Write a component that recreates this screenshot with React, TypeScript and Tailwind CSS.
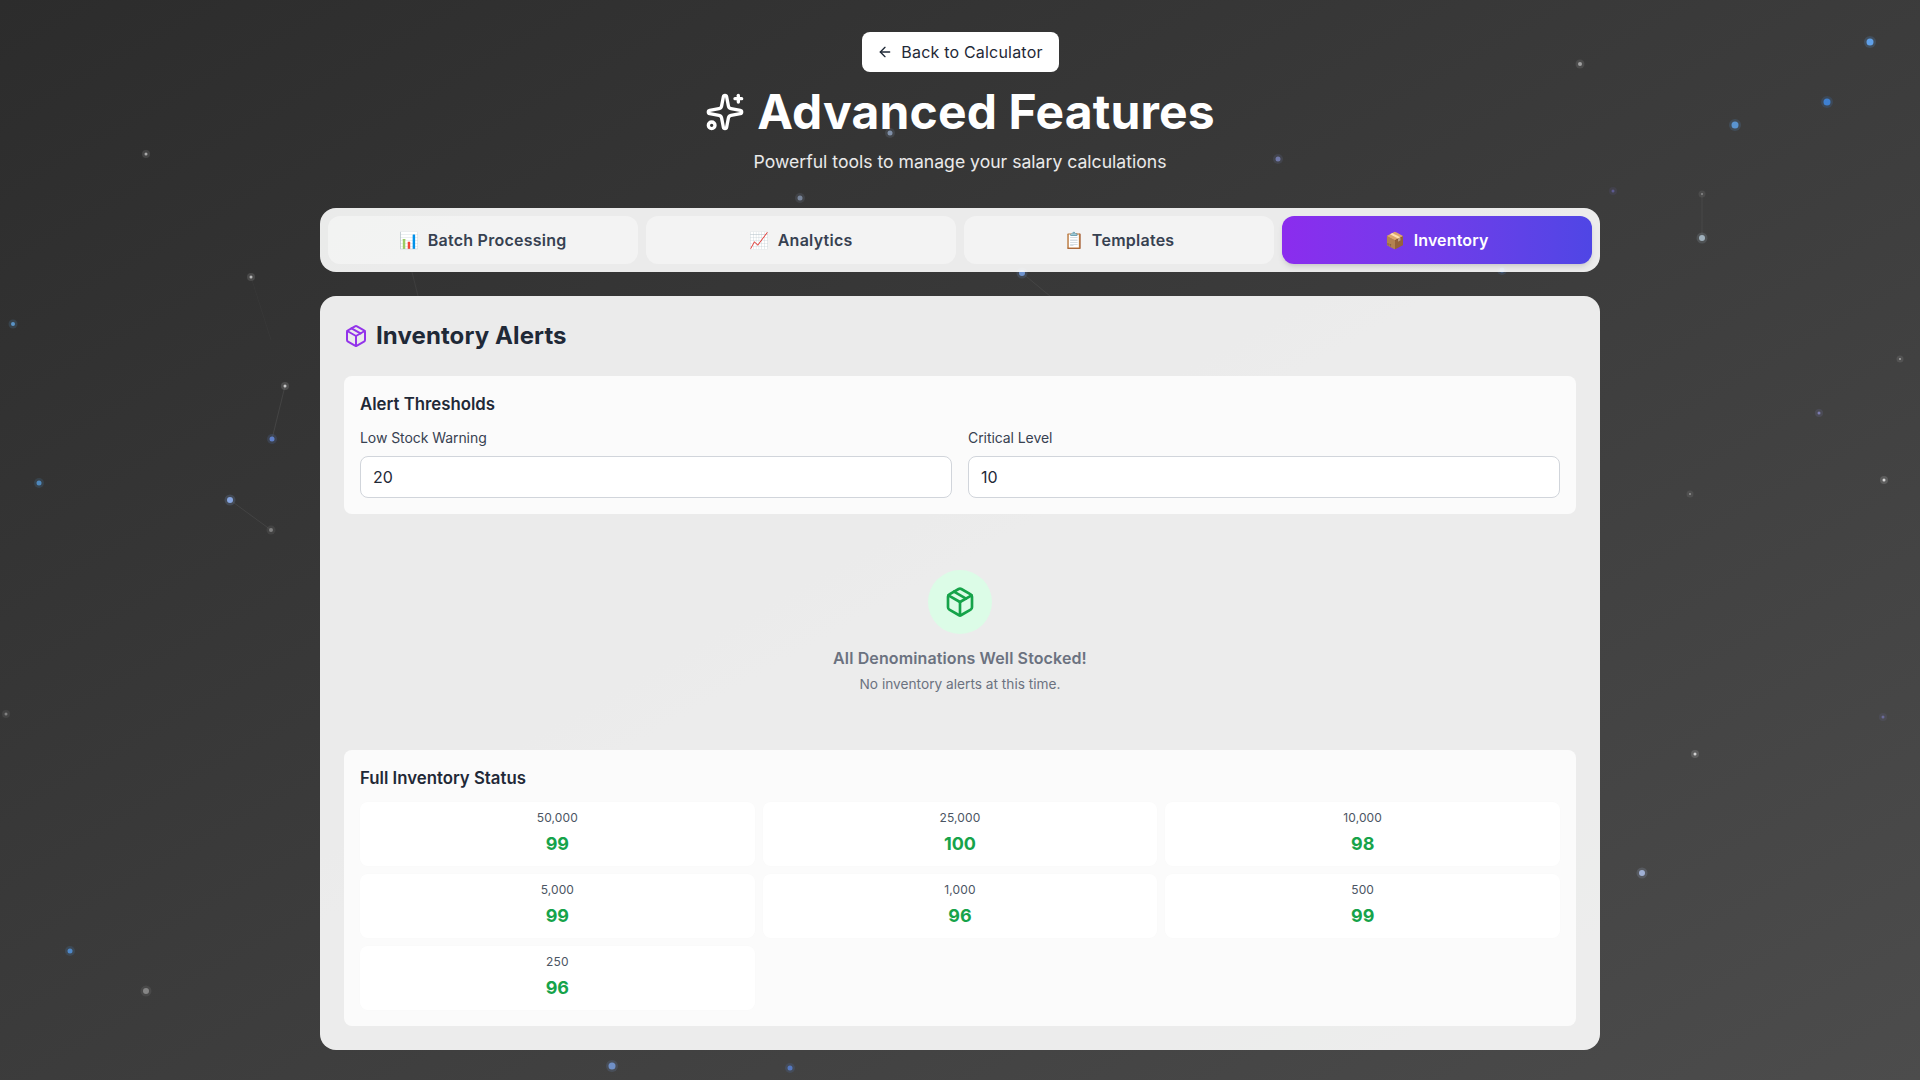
import { ArrowLeft, Package, Sparkles } from "lucide-react";

type Star = [number, number, number, string];
const stars: Star[] = [
  [146, 154, 1.5, "#a8a8a8"], [251, 277, 1.5, "#b8b8b8"], [285, 386, 1.5, "#c8c8c8"], [272, 439, 2.5, "#5f7fc8"],
  [230, 500, 3, "#86a5e0"], [271, 530, 2, "#808080"], [13, 324, 2, "#5a94c8"], [39, 483, 2.5, "#4f88bc"],
  [6, 714, 1.5, "#808080"], [70, 951, 2.5, "#4f88c8"], [146, 991, 3, "#858585"], [612, 1066, 3.5, "#7090c8"],
  [790, 1068, 2.5, "#5578c0"], [890, 133, 2.5, "#8090a8"], [800, 198, 2.5, "#78859a"], [1278, 159, 2.5, "#7078a8"],
  [1580, 64, 2, "#a0a0a0"], [1870, 42, 3.5, "#60a0e8"], [1827, 102, 3.5, "#3f80d0"], [1735, 125, 3.5, "#5a94d0"],
  [1613, 191, 1.5, "#5c5a90"], [1702, 194, 1, "#8a8a8a"], [1702, 238, 3, "#9fb0bc"], [1022, 273, 3, "#6f94d0"],
  [1502, 270, 2.5, "#4f80c0"], [1900, 359, 1, "#a8a8a8"], [1819, 413, 1.5, "#7c7cb0"], [1884, 480, 1.5, "#d8d8d8"],
  [1690, 494, 1, "#929292"], [1883, 717, 1.5, "#6a6a98"], [1695, 754, 1.5, "#d0d0d0"], [1642, 873, 3, "#a0b0d4"],
];
const lines: [number, number, number, number, number][] = [
  [285, 386, 272, 439, 0.08], [230, 500, 271, 530, 0.07], [251, 277, 271, 340, 0.025], [1702, 194, 1702, 238, 0.06], [1022, 273, 1050, 296, 0.06], [412, 272, 418, 296, 0.05],
];

const inventory = [
  ["50,000", "99"], ["25,000", "100"], ["10,000", "98"], ["5,000", "99"], ["1,000", "96"], ["500", "99"], ["250", "96"],
];

const tabs = [
  ["📊", "Batch Processing"], ["📈", "Analytics"], ["📋", "Templates"],
];

function Field({ label, value }: { label: string; value: string }) {
  return (
    <label className="block">
      <span className="mb-2 block text-sm leading-5 tracking-[-0.07px] text-[#374151]">{label}</span>
      <input
        readOnly
        value={value}
        className="block h-[42px] w-full rounded-lg border border-[#d1d5db] bg-white px-3 text-base text-[#1f2937] outline-none"
      />
    </label>
  );
}

export default function App() {
  return (
    <div className="relative min-h-[1080px] overflow-hidden bg-linear-to-br from-[#2c2c2c] to-[#4c4c4c] font-['Inter','Noto_Sans',sans-serif]">
      <svg className="absolute inset-0 h-[1080px] w-[1920px]" viewBox="0 0 1920 1080" aria-hidden="true">
        {lines.map(([a, b, c, d, o], i) => (
          <line key={i} x1={a} y1={b} x2={c} y2={d} stroke="#ffffff" strokeOpacity={o} />
        ))}
        {stars.map(([x, y, r, color], i) => (
          <g key={i}>
            <circle cx={x} cy={y} r={r + 2.5} fill={color} opacity="0.18" />
            <circle cx={x} cy={y} r={r} fill={color} />
          </g>
        ))}
      </svg>
      <div className="relative mx-auto flex w-[1280px] flex-col pt-8">
        <div className="flex flex-col items-center">
          <button className="mb-4 flex h-10 w-[197px] items-center justify-center gap-2 rounded-lg bg-white text-base tracking-[0.2px] text-[#1f2937]">
            <ArrowLeft size={16} />
            Back to Calculator
          </button>
          <h1 className="flex h-12 items-center gap-3 text-5xl font-bold tracking-[0.15px] text-white">
            <Sparkles size={40} />
            Advanced Features
          </h1>
          <p className="mt-3 text-[17.6px] leading-7 text-white/90">Powerful tools to manage your salary calculations</p>
        </div>

        <div className="mt-8 grid grid-cols-4 gap-2 rounded-2xl bg-white/90 p-2">
          {tabs.map(([emoji, label]) => (
            <div key={label} className="flex h-12 items-center justify-center gap-2 rounded-xl bg-white/40 text-base font-semibold tracking-[0.25px] text-[#374151]">
              <span>{emoji}</span>
              {label}
            </div>
          ))}
          <div className="flex h-12 items-center justify-center gap-2 rounded-xl bg-linear-to-r from-[#8b2cee] to-[#4f46e5] text-base font-semibold tracking-[0.15px] text-white shadow-md">
            <span>📦</span>
            Inventory
          </div>
        </div>

        <div className="mt-6 rounded-2xl bg-white/90 p-6">
          <h2 className="mb-6 flex h-8 items-center gap-2 text-2xl font-bold tracking-[0.1px] text-[#1f2937]">
            <Package size={24} className="text-[#9333ea]" />
            Inventory Alerts
          </h2>

          <section className="rounded-lg bg-white/80 p-4">
            <h3 className="mb-3 text-[16.8px] leading-6 font-semibold text-[#1f2937]">Alert Thresholds</h3>
            <div className="grid grid-cols-2 gap-4">
              <Field label="Low Stock Warning" value="20" />
              <Field label="Critical Level" value="10" />
            </div>
          </section>

          <div className="flex flex-col items-center py-14">
            <div className="mb-3 flex h-16 w-16 items-center justify-center rounded-full bg-[#dcfce7]">
              <Package size={32} className="text-[#16a34a]" />
            </div>
            <p className="text-base font-semibold tracking-[0.12px] text-[#6b7280]">All Denominations Well Stocked!</p>
            <p className="mt-1 text-[13.7px] leading-5 text-[#6b7280]">No inventory alerts at this time.</p>
          </div>

          <section className="rounded-lg bg-white/80 p-4">
            <h3 className="mb-3 text-[16.8px] leading-6 font-semibold text-[#1f2937]">Full Inventory Status</h3>
            <div className="grid grid-cols-3 gap-2">
              {inventory.map(([name, count]) => (
                <div key={name} className="rounded-lg bg-white p-2 text-center shadow-[0_0_4px_rgba(0,0,0,0.01)]">
                  <div className="mb-1 text-xs tracking-[0.1px] text-[#4b5563]">{name}</div>
                  <div className="text-lg font-bold text-[#16a34a]">{count}</div>
                </div>
              ))}
            </div>
          </section>
        </div>
      </div>
    </div>
  );
}
